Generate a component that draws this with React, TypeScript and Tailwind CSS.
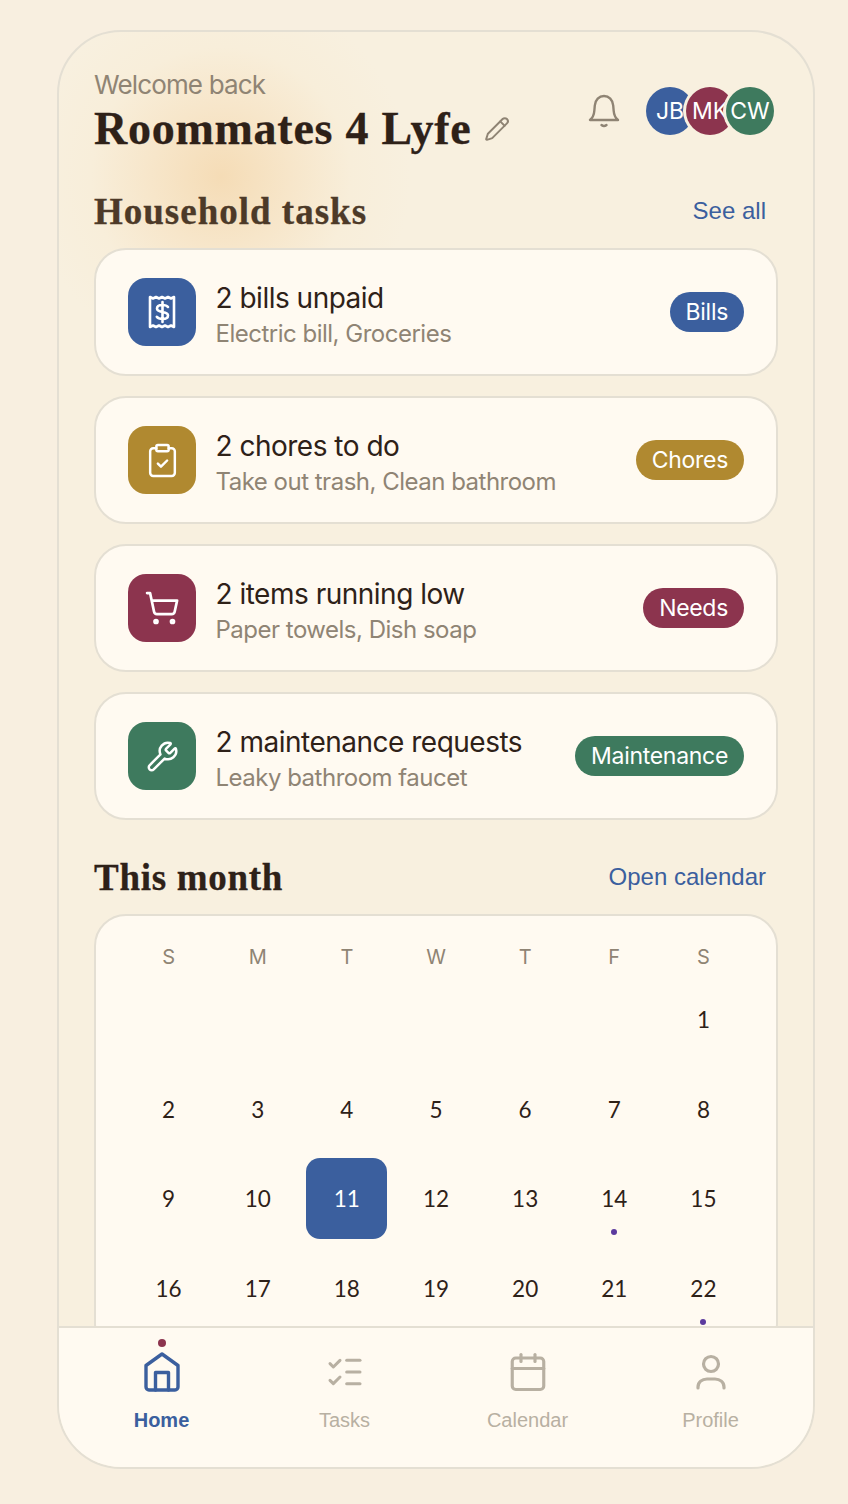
import React from 'react';
import { Pencil, ClipboardCheck, ShoppingCart, Wrench, ListChecks, Calendar } from 'lucide-react';

const serif = "font-['Liberation_Serif',serif] [-webkit-text-stroke:0.3px_currentColor]";
const sans = "font-['Inter',sans-serif]";
const digits = "font-['Lato',sans-serif]";
const arial = "font-['Liberation_Sans',sans-serif]";

function ReceiptIcon() {
  return (
    <svg width="32" height="36" viewBox="0 0 32 36" fill="none" stroke="white" strokeWidth="2.600" strokeLinejoin="round" strokeLinecap="round">
      <path d="M4 3v30l3-1.500 3 1.500 3-1.500 3 1.500 3-1.500 3 1.500 3-1.500 3 1.500V3l-3 1.500L22 3l-3 1.500L16 3l-3 1.500L10 3 7 4.500z" />
      <path d="M22 13c-1-1.400-3-2-5.700-2-3.200 0-5.300 1.300-5.300 3.500 0 5 11 2.200 11 7 0 2.200-2.300 3.500-5.500 3.500-2.700 0-4.700-.7-5.700-2.200M16.500 8v20" />
    </svg>
  );
}

function BellIcon() {
  return (
    <svg width="32" height="36" viewBox="0 0 32 36" fill="none" stroke="#8f8474" strokeWidth="2.400" strokeLinecap="round" strokeLinejoin="round">
      <path d="M2 27h28c-3-2.500-4-5-4.300-9l-.5-5.500C24.700 7 21 3 16 3S7.300 7 6.800 12.500L6.300 18c-.3 4-1.300 6.500-4.300 9z" />
      <path d="M13.500 32c1.400 1.200 3.600 1.200 5 0" />
    </svg>
  );
}

function HomeIcon() {
  return (
    <svg width="36" height="40" viewBox="0 0 36 40" fill="none" stroke="#3b5f9e" strokeWidth="3.400" strokeLinejoin="round" strokeLinecap="round">
      <path d="M18 2 2 13.500V35a3 3 0 0 0 3 3h26a3 3 0 0 0 3-3V13.500z" />
      <path d="M11.500 38V20.500h13V38" />
    </svg>
  );
}

function ProfileIcon() {
  return (
    <svg width="30" height="36" viewBox="0 0 30 36" fill="none" stroke="#b8b0a2" strokeWidth="3.200" strokeLinecap="round">
      <circle cx="15" cy="10" r="7.500" />
      <path d="M2 34v-1c0-5 4-8 9-8h8c5 0 9 3 9 8v1" />
    </svg>
  );
}

const tasks = [
  { title: '2 bills unpaid', sub: 'Electric bill, Groceries', tag: 'Bills', color: 'bg-[#3b5f9e]', icon: <ReceiptIcon /> },
  { title: '2 chores to do', sub: 'Take out trash, Clean bathroom', tag: 'Chores', color: 'bg-[#b08930]', icon: <ClipboardCheck size={37} color="white" strokeWidth={1.6} /> },
  { title: '2 items running low', sub: 'Paper towels, Dish soap', tag: 'Needs', color: 'bg-[#8c344e]', icon: <ShoppingCart size={36} color="white" strokeWidth={1.8} /> },
  { title: '2 maintenance requests', sub: 'Leaky bathroom faucet', tag: 'Maintenance', color: 'bg-[#3e7a5e]', icon: <Wrench size={33} color="white" strokeWidth={1.8} /> },
];

const weekdays = ['S', 'M', 'T', 'W', 'T', 'F', 'S'];
// first of the month lands on a Saturday
const days: (number | null)[] = [null, null, null, null, null, null, ...Array.from({ length: 22 }, (_, i) => i + 1)];
const marked = [14, 22];

function TaskCard({ title, sub, tag, color, icon }: (typeof tasks)[number]) {
  return (
    <div className="flex h-[128px] items-center rounded-[32px] border-2 border-[#e4dfd3] bg-[#fffaf1] px-8">
      <div className={`flex h-[68px] w-[68px] shrink-0 items-center justify-center rounded-[18px] ${color}`}>{icon}</div>
      <div className="ml-[19.500px] flex-1 pt-[7px]">
        <div className={`${sans} text-[28px] leading-[36px] tracking-[-0.5px] text-[#2e2118]`}>{title}</div>
        <div className={`${sans} text-[24px] leading-[36px] tracking-[-0.5px] text-[#8f8474]`}>{sub}</div>
      </div>
      <span className={`${sans} flex h-10 items-center rounded-full px-4 text-[23px] tracking-[-0.3px] text-white ${color}`}>{tag}</span>
    </div>
  );
}

export default function App() {
  return (
    <div className="h-[1504px] w-[848px] bg-[#f8efe0] pl-[57px] pt-[30px]">
      <div className="flex h-[1439px] w-[758px] flex-col overflow-hidden rounded-[64px] border-2 border-[#e4dfd3] bg-[#f8f0df] bg-[radial-gradient(circle_at_162px_145px,#f5dcb6_0px,#f7e6ca_70px,#f8eeda_130px,#f8f0df_190px)]">
        <div className="min-h-0 flex-1 overflow-hidden px-[35px] pt-[38px]">
          <div className="flex items-start justify-between">
            <div>
              <div className={`${sans} text-[26px] leading-[30px] tracking-[-0.85px] text-[#8f8474]`}>Welcome back</div>
              <div className="flex items-center">
                <h1 className={`${serif} text-[46px] font-bold leading-[58px] tracking-[0.75px] text-[#2e2118]`}>Roommates 4 Lyfe</h1>
                <Pencil size={26} color="#8f8474" strokeWidth={1.8} className="ml-[13px]" />
              </div>
            </div>
            <div className="mr-[4px] mt-[17px] flex items-center">
              <BellIcon />
              <div className="ml-[26px] flex">
                <span className={`${sans} flex h-12 w-12 items-center justify-center rounded-full bg-[#3b5f9e] text-[23px] text-white`}>JB</span>
                <span className={`${sans} relative -ml-2 flex h-12 w-12 items-center justify-center rounded-full bg-[#8c344e] text-[23px] text-white ring-[3px] ring-[#f8f0df]`}>MK</span>
                <span className={`${sans} relative -ml-2 flex h-12 w-12 items-center justify-center rounded-full bg-[#3e7a5e] text-[23px] text-white ring-[3px] ring-[#f8f0df]`}>CW</span>
              </div>
            </div>
          </div>

          <div className="mt-[30px] flex items-center justify-between pr-[12px]">
            <h2 className={`${serif} text-[37px] font-bold leading-[48px] tracking-[1px] text-[#4d3a28]`}>Household tasks</h2>
            <span className={`${arial} pb-[3px] text-[24px] text-[#3b5f9e]`}>See all</span>
          </div>

          <div className="mt-[12px] flex flex-col gap-5">
            {tasks.map((task) => (
              <TaskCard key={task.tag} {...task} />
            ))}
          </div>

          <div className="mt-[34px] flex items-center justify-between pr-[12px]">
            <h2 className={`${serif} text-[37px] font-bold leading-[48px] tracking-[0.7px] text-[#2e2118]`}>This month</h2>
            <span className={`${arial} pb-[2px] text-[24px] text-[#3b5f9e]`}>Open calendar</span>
          </div>

          <div className="mt-[12px] rounded-[32px] border-2 border-[#e4dfd3] bg-[#fffaf1] px-8 pt-[28px] pb-6">
            <div className="grid grid-cols-7 gap-x-2">
              {weekdays.map((d, i) => (
                <div key={i} className={`${sans} text-center text-[20px] leading-[26px] text-[#8f8474]`}>{d}</div>
              ))}
            </div>
            <div className="mt-[9px] grid grid-cols-7 gap-x-2 gap-y-[8.500px]">
              {days.map((d, i) => (
                <div
                  key={i}
                  className={`${digits} relative flex h-[81px] items-center justify-center rounded-[14px] pt-[1px] text-[22.500px] ${d === 11 ? 'bg-[#3b5f9e] text-white' : 'text-[#2e2118]'}`}
                >
                  {d}
                  {d !== null && marked.includes(d) && <span className="absolute bottom-[4px] h-[6px] w-[6px] rounded-full bg-[#5b3a9e]" />}
                </div>
              ))}
            </div>
          </div>
        </div>

        <nav className="grid h-[141px] shrink-0 grid-cols-4 border-t-2 border-[#e4dfd3] bg-[#fffaf1] px-[11px]">
          <div className="relative flex flex-col items-center pt-[24px]">
            <span className="absolute top-[11px] h-2 w-2 rounded-full bg-[#8c344e]" />
            <HomeIcon />
            <span className={`${arial} mt-[13px] text-[20px] font-bold text-[#3b5f9e]`}>Home</span>
          </div>
          <div className="flex flex-col items-center pt-[24px]">
            <ListChecks size={40} color="#b8b0a2" strokeWidth={1.8} />
            <span className={`${arial} mt-[13px] text-[20px] text-[#b8b0a2]`}>Tasks</span>
          </div>
          <div className="flex flex-col items-center pt-[23px]">
            <Calendar size={42} color="#b8b0a2" strokeWidth={1.8} />
            <span className={`${arial} mt-[12px] text-[20px] text-[#b8b0a2]`}>Calendar</span>
          </div>
          <div className="flex flex-col items-center pt-[26px]">
            <ProfileIcon />
            <span className={`${arial} mt-[15px] text-[20px] text-[#b8b0a2]`}>Profile</span>
          </div>
        </nav>
      </div>
    </div>
  );
}
